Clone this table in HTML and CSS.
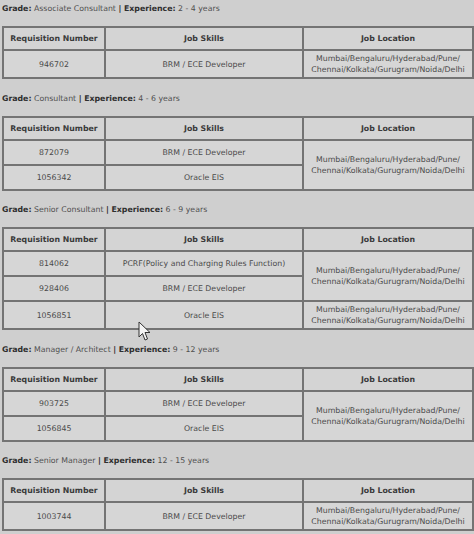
FILE: index.html
```html
<!DOCTYPE html>
<html>
<head>
<meta charset="utf-8">
<link rel="stylesheet" href="styles.css">
</head>
<body>
<div class="page">
  <section class="grade">
    <p class="head"><b>Grade:</b> Associate Consultant <b>| Experience:</b> 2 - 4 years</p>
    <table class="jobs">
      <colgroup><col class="c1"><col class="c2"><col class="c3"></colgroup>
      <tr><th>Requisition Number</th><th>Job Skills</th><th>Job Location</th></tr>
      <tr><td>946702</td><td>BRM / ECE Developer</td><td>Mumbai/Bengaluru/Hyderabad/Pune/<br>Chennai/Kolkata/Gurugram/Noida/Delhi</td></tr>
    </table>
  </section>

  <section class="grade">
    <p class="head"><b>Grade:</b> Consultant <b>| Experience:</b> 4 - 6 years</p>
    <table class="jobs">
      <colgroup><col class="c1"><col class="c2"><col class="c3"></colgroup>
      <tr><th>Requisition Number</th><th>Job Skills</th><th>Job Location</th></tr>
      <tr><td>872079</td><td>BRM / ECE Developer</td><td rowspan="2">Mumbai/Bengaluru/Hyderabad/Pune/<br>Chennai/Kolkata/Gurugram/Noida/Delhi</td></tr>
      <tr><td>1056342</td><td>Oracle EIS</td></tr>
    </table>
  </section>

  <section class="grade">
    <p class="head"><b>Grade:</b> Senior Consultant <b>| Experience:</b> 6 - 9 years</p>
    <table class="jobs">
      <colgroup><col class="c1"><col class="c2"><col class="c3"></colgroup>
      <tr><th>Requisition Number</th><th>Job Skills</th><th>Job Location</th></tr>
      <tr><td>814062</td><td>PCRF(Policy and Charging Rules Function)</td><td rowspan="2">Mumbai/Bengaluru/Hyderabad/Pune/<br>Chennai/Kolkata/Gurugram/Noida/Delhi</td></tr>
      <tr><td>928406</td><td>BRM / ECE Developer</td></tr>
      <tr><td>1056851</td><td>Oracle EIS</td><td>Mumbai/Bengaluru/Hyderabad/Pune/<br>Chennai/Kolkata/Gurugram/Noida/Delhi</td></tr>
    </table>
  </section>

  <section class="grade">
    <p class="head"><b>Grade:</b> Manager / Architect <b>| Experience:</b> 9 - 12 years</p>
    <table class="jobs">
      <colgroup><col class="c1"><col class="c2"><col class="c3"></colgroup>
      <tr><th>Requisition Number</th><th>Job Skills</th><th>Job Location</th></tr>
      <tr><td>903725</td><td>BRM / ECE Developer</td><td rowspan="2">Mumbai/Bengaluru/Hyderabad/Pune/<br>Chennai/Kolkata/Gurugram/Noida/Delhi</td></tr>
      <tr><td>1056845</td><td>Oracle EIS</td></tr>
    </table>
  </section>

  <section class="grade">
    <p class="head"><b>Grade:</b> Senior Manager <b>| Experience:</b> 12 - 15 years</p>
    <table class="jobs">
      <colgroup><col class="c1"><col class="c2"><col class="c3"></colgroup>
      <tr><th>Requisition Number</th><th>Job Skills</th><th>Job Location</th></tr>
      <tr><td>1003744</td><td>BRM / ECE Developer</td><td>Mumbai/Bengaluru/Hyderabad/Pune/<br>Chennai/Kolkata/Gurugram/Noida/Delhi</td></tr>
    </table>
  </section>

  <svg class="cursor" width="14" height="21" viewBox="0 0 14 21">
    <path d="M1 1 L1 16 L4.5 12.5 L7 19 L9.5 18 L7 11.5 L12 11.5 Z" fill="#f4f4f4" stroke="#333" stroke-width="1" stroke-linejoin="round"/>
  </svg>
</div>
</body>
</html>
```

FILE: styles.css
```css
html, body {
  margin: 0;
  padding: 0;
  background: #cfcfcf;
}
body {
  font-family: "DejaVu Sans", Verdana, sans-serif;
  font-size: 7.8px;
  color: #4a4a4a;
}
.page {
  position: relative;
  padding: 3px 2px 0 2px;
}
.grade {
  margin-bottom: 13.5px;
}
.head {
  margin: 0;
  line-height: 12px;
  height: 12px;
  color: #505050;
}
.head b {
  color: #2e2e2e;
}
.jobs {
  margin-top: 11px;
  width: 470px;
  border-collapse: collapse;
  table-layout: fixed;
  background: #d6d6d6;
  border: 2px solid #747474;
}
.c1 { width: 102px; }
.c2 { width: 198px; }
.c3 { width: 170px; }
.jobs th, .jobs td {
  border: 2px solid #747474;
  text-align: center;
  vertical-align: middle;
  line-height: 11px;
  white-space: nowrap;
  overflow: hidden;
}
.jobs th {
  color: #3a3a3a;
  font-weight: bold;
  padding: 5px 2px;
  background: #d4d4d4;
}
.jobs td {
  color: #4a4a4a;
  height: 19px;
  padding: 2px 2px;
}
.cursor {
  position: absolute;
  left: 138px;
  top: 321px;
}
```
